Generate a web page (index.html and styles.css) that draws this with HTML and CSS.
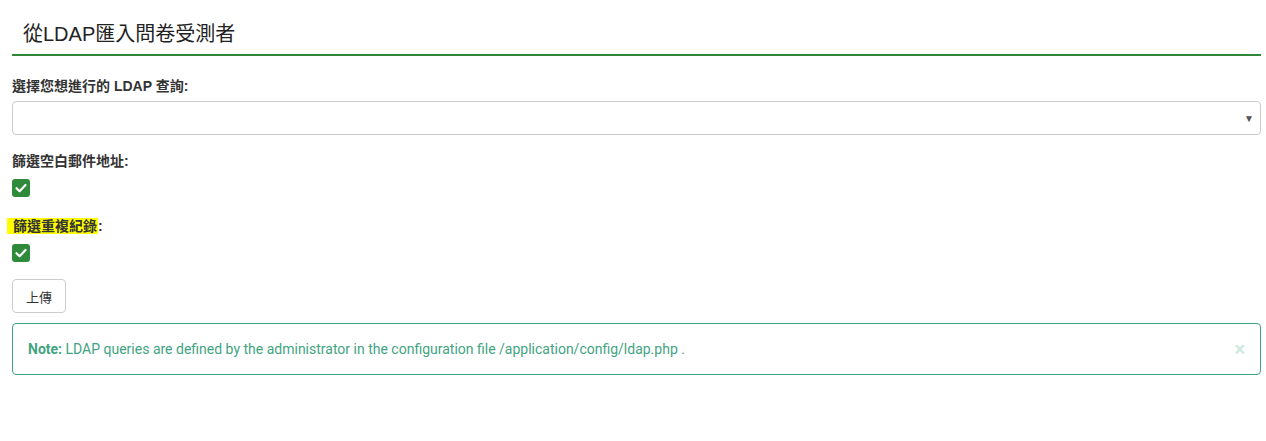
FILE: index.html
```html
<!DOCTYPE html>
<html lang="zh-Hant">
<head>
<meta charset="utf-8">
<title>從LDAP匯入問卷受測者</title>
<link rel="stylesheet" href="styles.css">
</head>
<body>
<div class="page">
  <h3 class="title">從LDAP匯入問卷受測者</h3>
  <form class="form">
    <div class="group group-select">
      <label class="label">選擇您想進行的 LDAP 查詢:</label>
      <div class="select"><span class="caret">▼</span></div>
    </div>
    <div class="group">
      <label class="label">篩選空白郵件地址:</label>
      <span class="check"><svg viewBox="0 0 18 18" width="18" height="18"><path d="M4.5 9.2 L7.6 12.2 L13.5 6" fill="none" stroke="#fff" stroke-width="2.2" stroke-linecap="round" stroke-linejoin="round"/></svg></span>
    </div>
    <div class="group group-last">
      <label class="label"><mark class="hl">篩選重複紀錄</mark>:</label>
      <span class="check"><svg viewBox="0 0 18 18" width="18" height="18"><path d="M4.5 9.2 L7.6 12.2 L13.5 6" fill="none" stroke="#fff" stroke-width="2.2" stroke-linecap="round" stroke-linejoin="round"/></svg></span>
    </div>
    <button type="button" class="btn">上傳</button>
    <div class="alert">
      <span><strong>Note:</strong> LDAP queries are defined by the administrator in the configuration file /application/config/ldap.php .</span>
      <span class="close">×</span>
    </div>
  </form>
</div>
</body>
</html>
```

FILE: styles.css
```css
html, body {
  margin: 0;
  padding: 0;
  background: #fff;
}
body {
  font-family: "Liberation Sans", "Noto Sans CJK TC", sans-serif;
  color: #333;
}
.page {
  padding: 0 5px 0 12px;
}
.title {
  margin: 0;
  font-weight: normal;
  font-size: 20px;
  line-height: 24px;
  color: #222;
  padding: 22px 0 8px 11px;
  border-bottom: 2px solid #2f8736;
}
.form {
  padding-top: 20px;
}
.group {
  margin-bottom: 19px;
}
.group-select {
  margin-bottom: 16px;
}
.group-last {
  margin-bottom: 17px;
}
.label {
  display: block;
  font-weight: bold;
  font-size: 14px;
  line-height: 20px;
  margin-bottom: 5px;
  color: #333;
}
.hl {
  background: #ffff00;
  color: #333;
  padding: 0 1px 0 6px;
  margin-left: -5px;
}
.select {
  height: 32px;
  border: 1px solid #ccc;
  border-radius: 4px;
  display: flex;
  align-items: center;
  justify-content: flex-end;
  padding-right: 6px;
}
.caret {
  font-size: 10px;
  color: #555;
}
.check {
  display: block;
  width: 18px;
  height: 18px;
  background: #2f8a3c;
  border-radius: 3px;
  margin-top: 8px;
}
.check svg {
  display: block;
}
.btn {
  display: block;
  margin: 0;
  height: 34px;
  box-sizing: border-box;
  padding: 0 13px;
  background: #fff;
  border: 1px solid #ccc;
  border-radius: 4px;
  font-family: "Liberation Sans", "Noto Sans CJK TC", sans-serif;
  font-size: 13px;
  color: #333;
}
.alert {
  margin-top: 10px;
  border: 1px solid #3fa37f;
  border-radius: 4px;
  height: 52px;
  box-sizing: border-box;
  padding: 0 15px;
  display: flex;
  align-items: center;
  justify-content: space-between;
  font-family: Roboto, "Noto Sans", sans-serif;
  font-size: 14px;
  color: #42a47f;
}
.alert strong {
  font-weight: bold;
}
.close {
  font-size: 20px;
  font-weight: bold;
  color: #cfe9df;
  margin-right: 0;
}
```
